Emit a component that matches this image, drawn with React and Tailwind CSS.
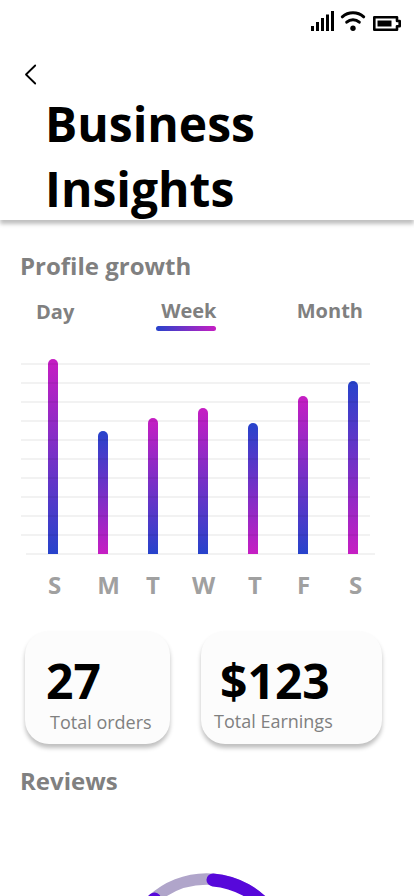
import React, { useState } from 'react';

const bars = [
    { day: 'S', height: 195, pinkTop: true },
    { day: 'M', height: 123, pinkTop: false },
    { day: 'T', height: 136, pinkTop: true },
    { day: 'W', height: 146, pinkTop: true },
    { day: 'T', height: 131, pinkTop: false },
    { day: 'F', height: 158, pinkTop: true },
    { day: 'S', height: 173, pinkTop: false },
];

const StatusBar = () => (
    <div className="flex h-11 justify-end pr-3 pt-2.5">
        <svg width="92" height="24" viewBox="0 0 92 24" fill="none">
            {/* Signal */}
            <path d="M1 16h3v5H1zM6 12h3v9H6zM11 8h3v13h-3zM16 4.500h3v16.500h-3zM21 1h3v20h-3z" fill="#000" />
            {/* Wifi */}
            <path d="M32.300 6.800A16 16 0 0 1 53.700 6.800M36.700 12.200A9.500 9.500 0 0 1 49.300 12.200" stroke="#000" strokeWidth="3" strokeLinecap="round" />
            <circle cx="43" cy="18.200" r="2.700" fill="#000" />
            {/* Battery */}
            <path d="M64.300 7.300H87V11H89.700V16.200H87V19.700H64.300Z" stroke="#000" strokeWidth="2.600" strokeLinejoin="round" />
            <path d="M67.500 10.500h14v6h-14z" fill="#000" />
        </svg>
    </div>
);

const Header = () => (
    <header className="h-[220px] shrink-0 bg-white shadow-[0_4px_4px_rgba(0,0,0,0.25)]">
        <StatusBar />
        <button className="ml-6 mt-5 block" aria-label="Back">
            <svg width="14" height="21" viewBox="0 0 14 21" fill="none">
                <path d="M11.200 1.500L2 10.500L11.200 19.500" stroke="#000" strokeWidth="1.800" strokeLinecap="round" strokeLinejoin="round" />
            </svg>
        </button>
        <h1 className="ml-[45px] mt-1.5 text-5xl font-bold leading-[65px] text-black">
            Business
            <br />
            Insights
        </h1>
    </header>
);

const Tabs = () => {
    const [active, setActive] = useState('Week');

    return (
        <div className="mt-[15px] flex items-start justify-between pl-9 pr-[51px] text-xl font-bold leading-[27px]">
            {['Day', 'Week', 'Month'].map((tab) => (
                <button
                    key={tab}
                    className={`flex h-[34px] flex-col items-end ${tab === 'Day' ? 'pt-px' : ''}`}
                    onClick={() => setActive(tab)}
                >
                    <span className={active === tab ? '-mr-px' : ''}>{tab}</span>
                    {active === tab && <span className="mt-[2px] h-[5px] w-[60px] rounded-full bg-linear-to-r/srgb from-[#2743cb] to-[#c61ec3]" />}
                </button>
            ))}
        </div>
    );
};

const Chart = () => (
    <div className="mt-7">
        <div className="relative ml-12 flex h-[195px] items-end gap-10">
            {bars.map((bar, i) => (
                <div
                    key={i}
                    className={`w-2.5 rounded-t-full ${bar.pinkTop ? 'bg-linear-to-t/srgb' : 'bg-linear-to-b/srgb'} from-[#2743cb] to-[#c61ec3]`}
                    style={{ height: bar.height }}
                />
            ))}
            {/* Grid lines lie over the bars */}
            <div className="absolute -left-[27px] top-1 flex w-[349px] flex-col gap-[17px]">
                {Array.from({ length: 10 }).map((_, i) => (
                    <div key={i} className="h-0.5 bg-black/5" />
                ))}
            </div>
            <div className="absolute -left-[22px] top-[194px] -z-10 h-0.5 w-[349px] bg-black/5" />
        </div>
        <div className="ml-[29px] mt-[14px] flex text-center text-2xl font-bold leading-[33px] text-[#a0a0a0]">
            <span className="w-[51px]">S</span>
            <span className="w-[57px]">M</span>
            <span className="w-8">T</span>
            <span className="w-[69px]">W</span>
            <span className="w-[34px]">T</span>
            <span className="w-[63px]">F</span>
            <span className="w-[41px]">S</span>
        </div>
    </div>
);

const Stats = () => (
    <div className="ml-[25px] mt-[30px] flex gap-[31px]">
        <div className="h-[113px] w-[145px] rounded-[24px] bg-[#fcfcfc] pt-[25px] shadow-[0_4px_4px_rgba(0,0,0,0.25)]">
            <p className="ml-[21px] text-5xl font-bold leading-[49px] text-black">27</p>
            <p className="ml-[25px] mt-[5px] text-lg leading-[25px]">Total orders</p>
        </div>
        <div className="h-[113px] w-[181px] rounded-[24px] bg-[#fcfcfc] pt-[25px] shadow-[0_4px_4px_rgba(0,0,0,0.25)]">
            <p className="ml-[19px] text-5xl font-bold leading-[49px] text-black">$123</p>
            <p className="ml-[13px] mt-1 text-lg leading-[25px]">Total Earnings</p>
        </div>
    </div>
);

const ReviewRing = () => (
    <svg className="mx-auto mt-[74px] shrink-0" width="176" height="176" viewBox="0 0 176 176" fill="none">
        <circle cx="87.500" cy="88" r="80" stroke="#b0a5ca" strokeWidth="11.500" />
        <path d="M94 8.900A80 80 0 1 1 35.500 28" stroke="#5708da" strokeWidth="13" strokeLinecap="round" />
    </svg>
);

const App = () => {
    return (
        <div className="isolate flex h-screen flex-col overflow-hidden bg-white font-['Open_Sans',sans-serif] text-[#808080]">
            <Header />
            <main>
                <h2 className="ml-5 mt-[29px] text-2xl font-bold leading-[33px]">Profile growth</h2>
                <Tabs />
                <Chart />
                <Stats />
                <h2 className="ml-5 mt-5 text-2xl font-bold leading-[33px]">Reviews</h2>
                <ReviewRing />
            </main>
        </div>
    );
};

export default App;
